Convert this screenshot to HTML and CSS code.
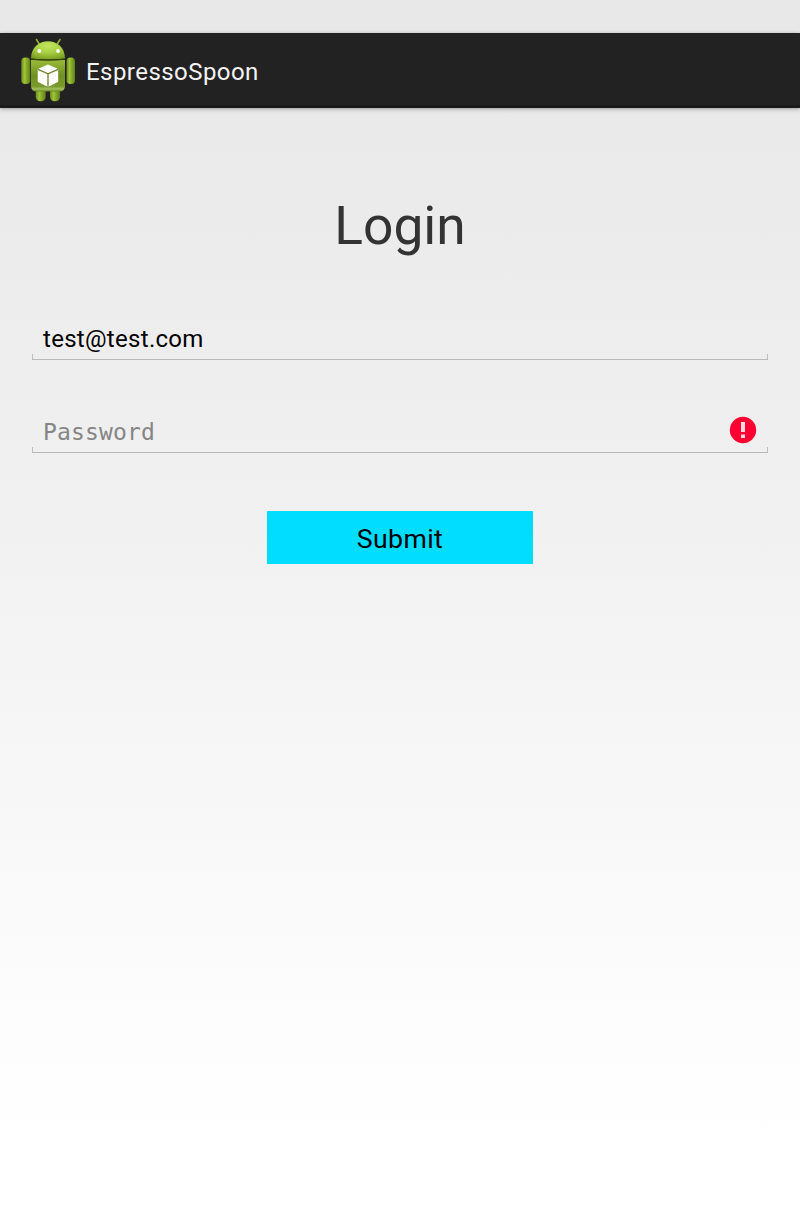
FILE: index.html
```html
<!DOCTYPE html>
<html lang="en">
<head>
<meta charset="utf-8">
<title>EspressoSpoon</title>
<link rel="stylesheet" href="styles.css">
</head>
<body>
<header class="action-bar">
  <svg class="app-icon" viewBox="0 0 64 72" width="64" height="72">
    <defs>
      <linearGradient id="limb" x1="0" x2="1" y1="0" y2="0">
        <stop offset="0" stop-color="#6a8a1a"/><stop offset=".35" stop-color="#a0c43a"/><stop offset="1" stop-color="#5f7f14"/>
      </linearGradient>
      <linearGradient id="body" x1="0" x2="0" y1="0" y2="1">
        <stop offset="0" stop-color="#9abb38"/><stop offset=".5" stop-color="#6f8f22"/><stop offset=".84" stop-color="#7a9b2b"/><stop offset=".92" stop-color="#a5c060"/><stop offset="1" stop-color="#6a8722"/>
      </linearGradient>
      <radialGradient id="head" cx=".5" cy=".25" r=".75">
        <stop offset="0" stop-color="#c4e85d"/><stop offset=".55" stop-color="#a6cd42"/><stop offset="1" stop-color="#7da022"/>
      </radialGradient>
    </defs>
    <path d="M20.500 5.500l3 5M44 5.500l-3 5" stroke="#8fb32f" stroke-width="1.600" stroke-linecap="round"/>
    <rect x="19.700" y="50" width="10" height="17.300" rx="4.500" fill="url(#limb)"/>
    <rect x="34" y="50" width="10" height="17.300" rx="4.500" fill="url(#limb)"/>
    <rect x="5.300" y="23.500" width="9" height="26.500" rx="3.800" fill="url(#limb)"/>
    <rect x="50.500" y="23.500" width="8.500" height="26.500" rx="3.800" fill="url(#limb)"/>
    <path d="M15 26h34v26q0 5.500-6 5.500h-22q-6 0-6-5.500z" fill="url(#body)"/>
    <path d="M15 24.500C15 1.500 49 1.500 49 24.500q-17 1.800-34 0z" fill="url(#head)"/>
    <path d="M15 25.200q17 1.800 34 0" stroke="#30400a" stroke-width="1.200" fill="none"/>
    <circle cx="23.300" cy="17" r="1.900" fill="#fff"/><circle cx="42" cy="17" r="1.900" fill="#fff"/>
    <path d="M32 30.500l10.200 4.600v12.600L32 53l-10.300-5.300V35.100z" fill="#fff"/>
    <path d="M22 35.300l10 4.500 10-4.500M32 39.800V53" stroke="#688522" stroke-width="1.300" fill="none"/>
  </svg>
  <span class="app-name">EspressoSpoon</span>
</header>
<main class="login">
  <h1 class="title">Login</h1>
  <div class="field"><span class="email">test@test.com</span></div>
  <div class="field">
    <span class="hint">Password</span>
    <svg class="error" viewBox="0 0 28 28" width="28" height="28">
      <circle cx="14" cy="14" r="13.200" fill="#ff0033"/>
      <path d="M12 6h4v10h-4zM12 18.500h4v3.500h-4z" fill="#f5dce1"/>
    </svg>
  </div>
  <button class="submit">Submit</button>
</main>
</body>
</html>
```
FILE: styles.css
```css
* { box-sizing: border-box; }
body {
  margin: 0;
  height: 1216px;
  padding-top: 33px;
  font-family: Roboto, sans-serif;
  background: linear-gradient(#e8e8e8 0, #e8e8e8 33px, #eaeaea 150px, #f0f0f0 480px, #f9f9f9 870px, #fefefe 1080px, #fff 1216px);
}
.action-bar {
  display: flex;
  align-items: center;
  height: 75px;
  padding-left: 16px;
  background: #222;
  border-bottom: 3px solid #1a1a1a;
  box-shadow: 0 1px 4px rgba(0, 0, 0, .35);
}
.app-icon { display: block; margin-top: 1px; }
.app-name {
  margin: 6px 0 0 6px;
  color: #f3f3f3;
  font-size: 24px;
  line-height: 28px;
  letter-spacing: .45px;
}
.login {
  display: flex;
  flex-direction: column;
  align-items: center;
  padding: 87px 32px 0;
}
.title {
  margin: 0 0 56px;
  color: #333;
  font-size: 53.3px;
  font-weight: 400;
  line-height: 63px;
}
.field {
  position: relative;
  display: flex;
  align-items: center;
  justify-content: space-between;
  width: 736px;
  height: 46px;
  margin-bottom: 47px;
  padding: 4px 11px 0;
  border-bottom: 1px solid #b9b9b9;
  font-size: 24px;
  line-height: 28px;
}
/* Upturned ends of the underline */
.field::before {
  content: "";
  position: absolute;
  inset: auto 0 0;
  height: 5px;
  border: solid #bdbdbd;
  border-width: 0 1px;
}
.email { color: #000; letter-spacing: .3px; }
.hint {
  color: #858585;
  font: 23px/28px "DejaVu Sans Mono", monospace;
  letter-spacing: .15px;
}
.error { display: block; margin: -3px 0 0; }
.submit {
  width: 266px;
  height: 53px;
  margin-top: 11px;
  padding: 3px 0 0;
  border: 0;
  background: #00ddff;
  color: #000;
  font: 26.67px/32px Roboto, sans-serif;
  letter-spacing: .4px;
}
```
